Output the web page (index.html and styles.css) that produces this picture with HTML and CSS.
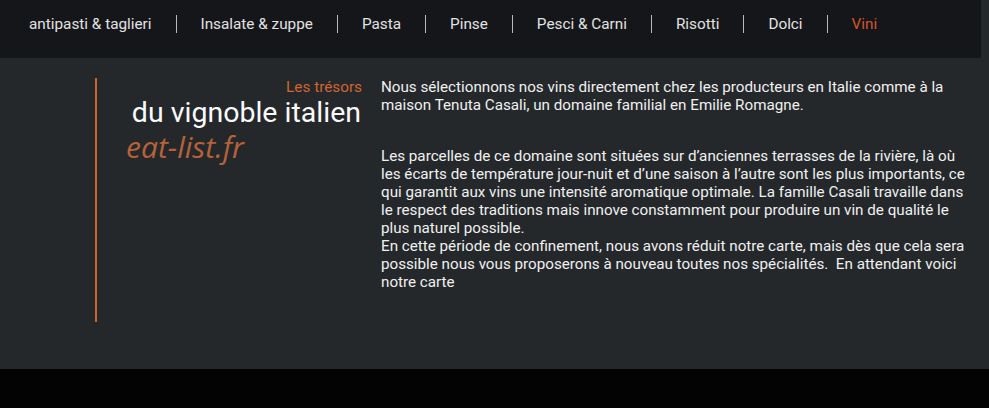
FILE: index.html
```html
<!DOCTYPE html>
<html lang="fr">
<head>
<meta charset="utf-8">
<title>Vini</title>
<link rel="stylesheet" href="styles.css">
</head>
<body>
<nav class="nav">
  <a class="nav-item">antipasti &amp; taglieri</a><span class="sep"></span>
  <a class="nav-item">Insalate &amp; zuppe</a><span class="sep"></span>
  <a class="nav-item">Pasta</a><span class="sep"></span>
  <a class="nav-item">Pinse</a><span class="sep"></span>
  <a class="nav-item">Pesci &amp; Carni</a><span class="sep"></span>
  <a class="nav-item">Risotti</a><span class="sep"></span>
  <a class="nav-item">Dolci</a><span class="sep"></span>
  <a class="nav-item active">Vini</a>
</nav>
<main class="main">
  <div class="intro">
    <div class="kicker">Les trésors</div>
    <h1 class="title">du vignoble italien</h1>
    <div class="brand">eat-list.fr</div>
  </div>
  <div class="text">
    <p class="para first">Nous sélectionnons nos vins directement chez les producteurs en Italie comme à la maison Tenuta Casali, un domaine familial en Emilie Romagne.</p>
    <p class="para">Les parcelles de ce domaine sont situées sur d’anciennes terrasses de la rivière, là où les écarts de température jour-nuit et d’une saison à l’autre sont les plus importants, ce qui garantit aux vins une intensité aromatique optimale. La famille Casali travaille dans le respect des traditions mais innove constamment pour produire un vin de qualité le plus naturel possible.<br>En cette période de confinement, nous avons réduit notre carte, mais dès que cela sera possible nous vous proposerons à nouveau toutes nos spécialités.&nbsp; En attendant voici notre carte</p>
  </div>
</main>
<div class="footer"></div>
</body>
</html>
```
FILE: styles.css
```css
html, body {
  margin: 0;
  padding: 0;
}
body {
  background: #25282b;
  font-family: Roboto, "Liberation Sans", sans-serif;
  height: 408px;
  overflow: hidden;
}
.nav {
  width: 981px;
  height: 58px;
  background: #151619;
  display: flex;
  align-items: flex-start;
  padding-left: 29px;
  padding-top: 15px;
  box-sizing: border-box;
}
.nav-item {
  color: #e2e2e2;
  font-size: 15.3px;
  line-height: 18px;
  text-decoration: none;
}
.nav-item.active {
  color: #d4542a;
}
.sep {
  width: 1px;
  height: 18px;
  background: #b9b9b9;
  margin: 0 24px;
}
.main {
  height: 311px;
  display: flex;
  padding-top: 20px;
  box-sizing: border-box;
}
.intro {
  margin-left: 95px;
  width: 267px;
  height: 244px;
  border-left: 2px solid #c9652f;
  box-sizing: border-box;
  text-align: right;
}
.kicker {
  color: #d1652f;
  font-size: 15.3px;
  line-height: 18px;
}
.title {
  margin: 0;
  color: #fafafa;
  font-weight: 400;
  font-size: 28.5px;
  line-height: 34px;
  margin-right: 1px;
}
.brand {
  text-align: left;
  padding-left: 29px;
  font-family: "Open Sans", sans-serif;
  font-style: italic;
  color: #b5623a;
  font-size: 30px;
  line-height: 36px;
  margin-top: -1px;
}
.text {
  margin-left: 19px;
  width: 596px;
  color: #f0f0f0;
  font-size: 15.2px;
  line-height: 18px;
}
.para {
  margin: 0;
}
.para.first {
  margin-bottom: 33px;
}
.footer {
  height: 39px;
  background: #030303;
}
```
